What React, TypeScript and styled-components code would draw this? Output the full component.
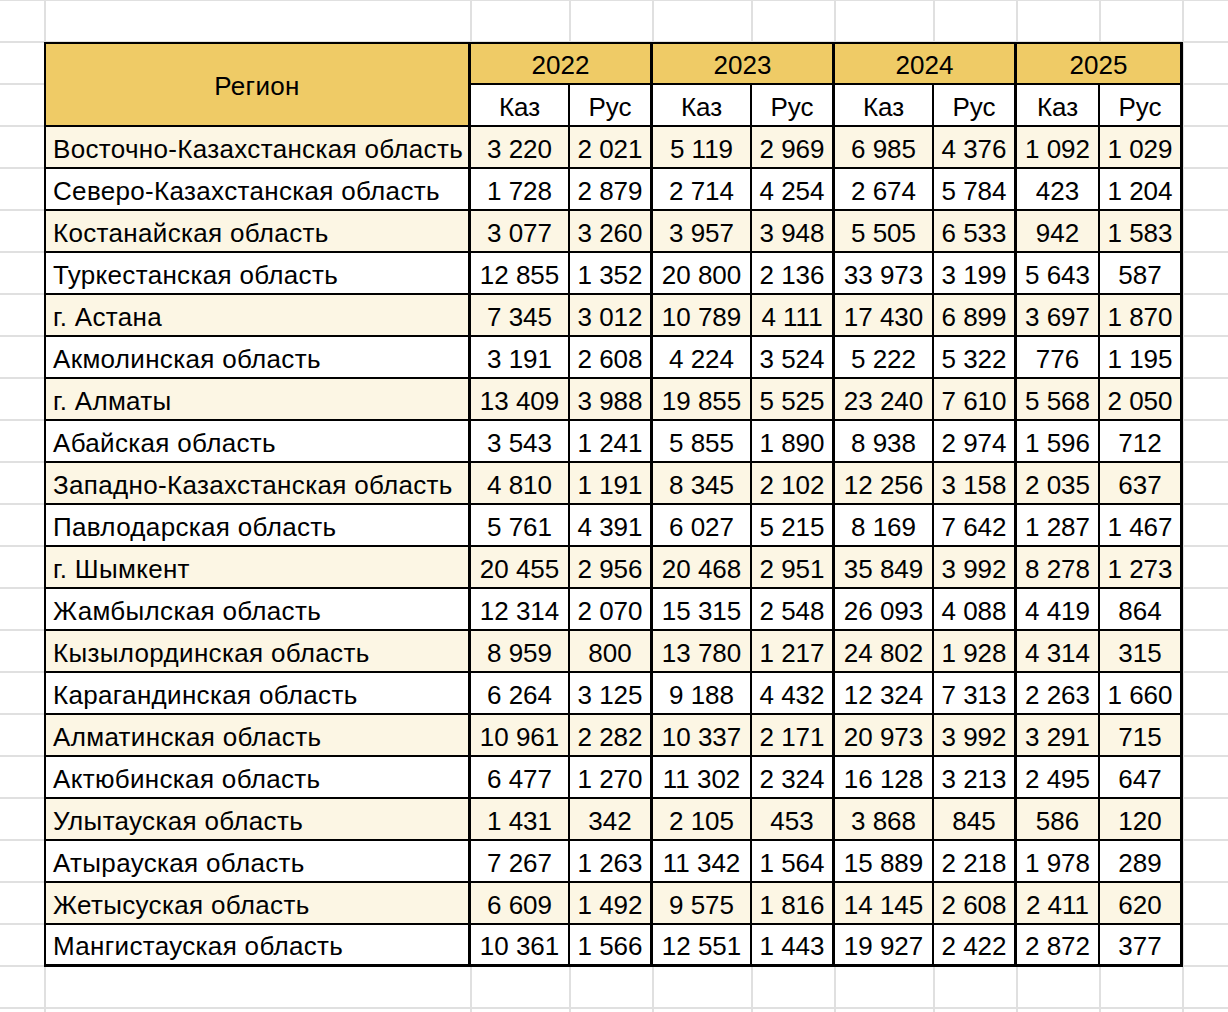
import React from 'react';
import styled, { createGlobalStyle } from 'styled-components';

const GlobalStyle = createGlobalStyle`
  html, body {
    margin: 0;
    padding: 0;
    background: #fff;
  }
  body {
    font-family: 'Liberation Sans', Arial, sans-serif;
  }
`;

const GRID = '#e0e0e0';
const GOLD = '#efcb66';
const CREAM = '#fcf6e4';

// vertical sheet lines (x of each column edge)
const colLines = [44, 470, 569, 652, 751, 834, 933, 1016, 1099, 1182];

const Sheet = styled.div`
  width: 1228px;
  height: 1012px;
  overflow: hidden;
  box-sizing: border-box;
  padding: 42px 0 0 44px;
  background-color: #fff;
  background-image: ${colLines
      .map(() => `linear-gradient(${GRID}, ${GRID})`)
      .join(', ')},
    repeating-linear-gradient(
      to bottom,
      ${GRID} 0 2px,
      transparent 2px 42px
    );
  background-repeat: ${colLines.map(() => 'no-repeat').join(', ')}, repeat;
  background-size: ${colLines.map(() => '2px 100%').join(', ')}, 100% 42px;
  background-position: ${colLines.map((x) => `${x}px 0`).join(', ')}, 0 -1px;
`;

const Table = styled.div`
  display: inline-grid;
  grid-template-columns: 425px 99px 83px 99px 83px 99px 83px 83px 83px;
  grid-template-rows: 41px 42px repeat(20, 42px);
  border-left: 2px solid #000;
  border-top: 2px solid #000;
  color: #000;
  font-size: 26px;
`;

const Cell = styled.div<{ $end?: boolean; $last?: boolean; $bg?: string }>`
  box-sizing: border-box;
  display: flex;
  align-items: center;
  justify-content: center;
  padding-top: 4px;
  white-space: nowrap;
  background: ${(p) => p.$bg ?? '#fff'};
  border-right: ${(p) => (p.$end ? 3 : 2)}px solid #000;
  border-bottom: ${(p) => (p.$last ? 3 : 2)}px solid #000;
`;

const RegionHead = styled(Cell)`
  grid-row: 1 / span 2;
  background: ${GOLD};
  letter-spacing: 0.3px;
`;

const YearHead = styled(Cell)`
  grid-column: span 2;
  background: ${GOLD};
`;

const RegionCell = styled(Cell)`
  justify-content: flex-start;
  padding-left: 7px;
  letter-spacing: 0.33px;
`;

const years = ['2022', '2023', '2024', '2025'];

const rows: [string, string[]][] = [
  ['Восточно-Казахстанская область', ['3 220', '2 021', '5 119', '2 969', '6 985', '4 376', '1 092', '1 029']],
  ['Северо-Казахстанская область', ['1 728', '2 879', '2 714', '4 254', '2 674', '5 784', '423', '1 204']],
  ['Костанайская область', ['3 077', '3 260', '3 957', '3 948', '5 505', '6 533', '942', '1 583']],
  ['Туркестанская область', ['12 855', '1 352', '20 800', '2 136', '33 973', '3 199', '5 643', '587']],
  ['г. Астана', ['7 345', '3 012', '10 789', '4 111', '17 430', '6 899', '3 697', '1 870']],
  ['Акмолинская область', ['3 191', '2 608', '4 224', '3 524', '5 222', '5 322', '776', '1 195']],
  ['г. Алматы', ['13 409', '3 988', '19 855', '5 525', '23 240', '7 610', '5 568', '2 050']],
  ['Абайская область', ['3 543', '1 241', '5 855', '1 890', '8 938', '2 974', '1 596', '712']],
  ['Западно-Казахстанская область', ['4 810', '1 191', '8 345', '2 102', '12 256', '3 158', '2 035', '637']],
  ['Павлодарская область', ['5 761', '4 391', '6 027', '5 215', '8 169', '7 642', '1 287', '1 467']],
  ['г. Шымкент', ['20 455', '2 956', '20 468', '2 951', '35 849', '3 992', '8 278', '1 273']],
  ['Жамбылская область', ['12 314', '2 070', '15 315', '2 548', '26 093', '4 088', '4 419', '864']],
  ['Кызылординская область', ['8 959', '800', '13 780', '1 217', '24 802', '1 928', '4 314', '315']],
  ['Карагандинская область', ['6 264', '3 125', '9 188', '4 432', '12 324', '7 313', '2 263', '1 660']],
  ['Алматинская область', ['10 961', '2 282', '10 337', '2 171', '20 973', '3 992', '3 291', '715']],
  ['Актюбинская область', ['6 477', '1 270', '11 302', '2 324', '16 128', '3 213', '2 495', '647']],
  ['Улытауская область', ['1 431', '342', '2 105', '453', '3 868', '845', '586', '120']],
  ['Атырауская область', ['7 267', '1 263', '11 342', '1 564', '15 889', '2 218', '1 978', '289']],
  ['Жетысуская область', ['6 609', '1 492', '9 575', '1 816', '14 145', '2 608', '2 411', '620']],
  ['Мангистауская область', ['10 361', '1 566', '12 551', '1 443', '19 927', '2 422', '2 872', '377']],
];

export default function App() {
  return (
    <>
      <GlobalStyle />
      <Sheet>
        <Table>
          <RegionHead $end>Регион</RegionHead>
          {years.map((y) => (
            <YearHead key={y} $end>
              {y}
            </YearHead>
          ))}
          {years.map((y) => (
            <React.Fragment key={y}>
              <Cell>Каз</Cell>
              <Cell $end>Рус</Cell>
            </React.Fragment>
          ))}

          {rows.map(([region, values], i) => {
            const bg = i % 2 === 0 ? CREAM : '#fff';
            const last = i === rows.length - 1;
            return (
              <React.Fragment key={region}>
                <RegionCell $end $last={last} $bg={bg}>
                  {region}
                </RegionCell>
                {values.map((v, j) => (
                  <Cell key={j} $end={j % 2 === 1} $last={last} $bg={bg}>
                    {v}
                  </Cell>
                ))}
              </React.Fragment>
            );
          })}
        </Table>
      </Sheet>
    </>
  );
}
